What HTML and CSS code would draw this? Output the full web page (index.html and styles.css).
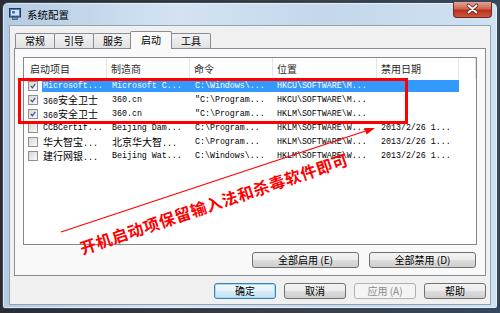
FILE: index.html
```html
<!DOCTYPE html>
<html lang="zh-CN">
<head>
  <meta charset="UTF-8">
  <title>系统配置</title>
  <link rel="stylesheet" href="styles.css">
</head>
<body>

  <div class="window">
    <!-- title bar -->
    <div class="titlebar">
      <svg class="app-icon" viewBox="0 0 12 12">
        <rect x="0.5" y="0.5" width="11" height="8.5" fill="#5a7fb8" stroke="#27395a"/>
        <rect x="2" y="2" width="8" height="5.5" fill="#cfe2f6"/>
        <rect x="3" y="3" width="3" height="2.5" fill="#4a76c0"/>
        <rect x="3.5" y="9" width="5" height="2.5" fill="#7d8ea6" stroke="#27395a" stroke-width="0.6"/>
      </svg>
      <span class="title">系统配置</span>
      <div class="close-btn">
        <svg viewBox="0 0 39 16" width="39" height="16">
          <path d="M15.5 4.5 L23.5 11.5 M23.5 4.5 L15.5 11.5" stroke="#5b1a12" stroke-width="3.6" stroke-linecap="round"/>
          <path d="M15.5 4.5 L23.5 11.5 M23.5 4.5 L15.5 11.5" stroke="#ffffff" stroke-width="2" stroke-linecap="round"/>
        </svg>
      </div>
    </div>

    <div class="client">
      <div class="tabs">
        <div class="tab">常规</div>
        <div class="tab">引导</div>
        <div class="tab">服务</div>
        <div class="tab active">启动</div>
        <div class="tab">工具</div>
      </div>

      <div class="panel">
        <div class="listview">
          <div class="lv-header">
            <div class="cell c1">启动项目</div>
            <div class="cell c2">制造商</div>
            <div class="cell c3">命令</div>
            <div class="cell c4">位置</div>
            <div class="cell c5">禁用日期</div>
            <div class="cell filler"></div>
          </div>

          <div class="lv-row selected">
            <div class="cell c1"><span class="chk on"><svg viewBox="0 0 10 10"><path d="M2.2 4.8 L4.2 7.2 L7.8 2.4" stroke="#33489a" stroke-width="1.5" fill="none"/></svg></span><span class="label">Microsoft...</span></div>
            <div class="cell c2">Microsoft C...</div>
            <div class="cell c3">C:\Windows\...</div>
            <div class="cell c4">HKCU\SOFTWARE\M...</div>
            <div class="cell c5"></div>
          </div>

          <div class="lv-row">
            <div class="cell c1"><span class="chk on"><svg viewBox="0 0 10 10"><path d="M2.2 4.8 L4.2 7.2 L7.8 2.4" stroke="#33489a" stroke-width="1.5" fill="none"/></svg></span><span class="label">360<span class="zh">安全卫士</span></span></div>
            <div class="cell c2">360.cn</div>
            <div class="cell c3">&quot;C:\Program...</div>
            <div class="cell c4">HKCU\SOFTWARE\M...</div>
            <div class="cell c5"></div>
          </div>

          <div class="lv-row">
            <div class="cell c1"><span class="chk on"><svg viewBox="0 0 10 10"><path d="M2.2 4.8 L4.2 7.2 L7.8 2.4" stroke="#33489a" stroke-width="1.5" fill="none"/></svg></span><span class="label">360<span class="zh">安全卫士</span></span></div>
            <div class="cell c2">360.cn</div>
            <div class="cell c3">&quot;C:\Program...</div>
            <div class="cell c4">HKLM\SOFTWARE\W...</div>
            <div class="cell c5"></div>
          </div>

          <div class="lv-row">
            <div class="cell c1"><span class="chk"></span><span class="label">CCBCertif...</span></div>
            <div class="cell c2">Beijing Dam...</div>
            <div class="cell c3">C:\Program...</div>
            <div class="cell c4">HKLM\SOFTWARE\W...</div>
            <div class="cell c5">2013/2/26 1...</div>
          </div>

          <div class="lv-row">
            <div class="cell c1"><span class="chk"></span><span class="label"><span class="zh">华大智宝</span>...</span></div>
            <div class="cell c2"><span class="zh">北京华大智</span>...</div>
            <div class="cell c3">C:\Program...</div>
            <div class="cell c4">HKLM\SOFTWARE\W...</div>
            <div class="cell c5">2013/2/26 1...</div>
          </div>

          <div class="lv-row">
            <div class="cell c1"><span class="chk"></span><span class="label"><span class="zh">建行网银</span>...</span></div>
            <div class="cell c2">Beijing Wat...</div>
            <div class="cell c3">C:\Windows\...</div>
            <div class="cell c4">HKLM\SOFTWARE\W...</div>
            <div class="cell c5">2013/2/26 1...</div>
          </div>
        </div>

        <div class="panel-buttons">
          <button class="btn wide">全部启用 (E)</button>
          <button class="btn wide">全部禁用 (D)</button>
        </div>
      </div>

      <div class="dlg-buttons">
        <button class="btn default">确定</button>
        <button class="btn">取消</button>
        <button class="btn disabled">应用 (A)</button>
        <button class="btn">帮助</button>
      </div>
    </div>
  </div>

  <!-- red annotation drawn over the dialog -->
  <div class="annot-box"></div>
  <svg class="annot-arrow" viewBox="0 0 500 313" width="500" height="313">
    <line x1="61" y1="232" x2="367" y2="130.5" stroke="#ff0000" stroke-width="1.3"/>
    <polygon points="375,128 366.6,134.5 364.4,127.9" fill="#ff0000"/>
  </svg>
  <div class="annot-text">开机启动项保留输入法和杀毒软件即可</div>

</body>
</html>
```

FILE: styles.css
```css
body {
  margin: 0;
  width: 500px;
  height: 313px;
  overflow: hidden;
  position: relative;
  background: linear-gradient(to right, #2a2d33, #3a3f47 60%, #34475e);
  font-family: "Noto Sans CJK SC", sans-serif;
}
.window {
  margin: 2px 0 0 2px;
  width: 496px;
  height: 307px;
  box-sizing: border-box;
  border: 1px solid #3b4756;
  border-radius: 6px 6px 3px 3px;
  background: linear-gradient(to right, #b5cbe2, #d3e3f2 35%, #c4d7eb 65%, #d0e1f1);
  box-shadow: inset 0 0 0 1px rgba(255, 255, 255, 0.55);
  padding: 0 6px 3px;
  display: flex;
  flex-direction: column;
}
.titlebar {
  height: 22px;
  display: flex;
  align-items: center;
}
.app-icon {
  width: 12px;
  height: 12px;
  margin-right: 6px;
}
.title {
  font-size: 10.5px;
  color: #000;
}
.close-btn {
  margin-left: auto;
  margin-right: -1px;
  margin-top: -1px;
  align-self: flex-start;
  width: 39px;
  height: 16px;
  box-sizing: border-box;
  border: 1px solid #6a2a22;
  border-top: none;
  border-radius: 0 0 4px 4px;
  background: linear-gradient(#e4a393, #cf6652 45%, #b8321f 55%, #d0563a);
}
.close-btn svg {
  display: block;
  margin: -1px 0 0 -1px;
}
.client {
  flex: 1;
  background: #f0f0f0;
  border: 1px solid #8fa3b9;
  padding: 5px 4px 0;
}

/* tabs */
.tabs {
  display: flex;
  align-items: flex-end;
  height: 18px;
  padding-left: 1px;
  margin-bottom: -1px;
  position: relative;
  z-index: 1;
}
.tab {
  height: 14px;
  margin-bottom: 1px;
  margin-right: -1px;
  padding: 0 9px;
  border: 1px solid #898c95;
  border-bottom: none;
  border-radius: 2px 2px 0 0;
  background: linear-gradient(#f3f3f3, #e2e2e2);
  font-size: 10px;
  line-height: 14px;
  color: #000;
}
.tab.active {
  height: 17px;
  margin: 0 -1px 0 -2px;
  padding: 0 10px;
  background: #f9f9f9;
  line-height: 16px;
  position: relative;
}
.panel {
  height: 228px;
  box-sizing: border-box;
  border: 1px solid #898c95;
  background: #f9f9f9;
  padding: 8px;
}

/* list view */
.listview {
  height: 188px;
  box-sizing: border-box;
  border: 1px solid #828790;
  background: #fff;
}
.lv-header {
  display: flex;
  height: 21px;
}
.lv-header .cell {
  border-right: 1px solid #e5e5e5;
  font-size: 10px;
  line-height: 21px;
  padding-left: 4px;
  color: #2a2a2a;
}
.lv-header .c1 {
  padding-left: 6px;
}
.cell {
  box-sizing: border-box;
  white-space: nowrap;
}
.c1 { width: 83px; }
.c2 { width: 83px; }
.c3 { width: 83px; }
.c4 { width: 104px; }
.c5 { width: 82px; }
.filler { width: 17px; }
.lv-row {
  display: flex;
  height: 14px;
  font-family: "Liberation Mono", monospace;
  font-size: 8.3px;
  color: #000;
}
.lv-row .cell {
  height: 14px;
  line-height: 14px;
  padding-left: 5px;
}
.lv-row .c4,
.lv-row .c5 {
  padding-left: 4px;
}
.lv-row .c1 {
  display: flex;
  align-items: center;
  padding-left: 4px;
}
.lv-row .label {
  flex: 1;
  height: 14px;
  margin-left: 4px;
  padding-left: 1px;
}
.zh {
  font-family: "Noto Sans CJK SC", sans-serif;
  font-size: 10px;
  line-height: 14px;
}
.lv-row.selected .label,
.lv-row.selected .c2,
.lv-row.selected .c3,
.lv-row.selected .c4,
.lv-row.selected .c5 {
  background: linear-gradient(transparent 1px, #3399ff 1px, #3399ff 13px, transparent 13px);
  color: #fff;
}
.chk {
  width: 10px;
  height: 10px;
  flex: none;
  box-sizing: border-box;
  border: 1px solid #8e8f8f;
  background: linear-gradient(135deg, #d6d6d6, #fafafa);
}
.chk svg {
  display: block;
  width: 8px;
  height: 8px;
}

/* buttons */
.btn {
  width: 62px;
  height: 16px;
  box-sizing: border-box;
  padding: 0;
  border: 1px solid #707070;
  border-radius: 3px;
  background: linear-gradient(#f2f2f2 0%, #ebebeb 50%, #dddddd 50%, #cfcfcf 100%);
  font-family: "Noto Sans CJK SC", sans-serif;
  font-size: 10px;
  line-height: 14px;
  color: #000;
}
.btn.wide {
  width: 107px;
}
.btn.default {
  border-color: #3c7fb1;
  box-shadow: inset 0 0 0 1px #9fdcf6;
  background: linear-gradient(#f1f8fc 0%, #e6f3fa 50%, #d6ebf6 50%, #c9e3f2 100%);
}
.btn.disabled {
  border-color: #adb2b5;
  background: #f4f4f4;
  color: #8a8a8a;
}
.panel-buttons {
  display: flex;
  justify-content: flex-end;
  gap: 10px;
  margin-top: 7px;
  padding-right: 1px;
}
.dlg-buttons {
  display: flex;
  justify-content: flex-end;
  gap: 8px;
  margin-top: 7px;
}

/* red annotation on top */
.annot-box {
  position: absolute;
  left: 18px;
  top: 78px;
  width: 390px;
  height: 46px;
  box-sizing: border-box;
  border: 3px solid #ff0000;
}
.annot-arrow {
  position: absolute;
  left: 0;
  top: 0;
  pointer-events: none;
}
.annot-text {
  position: absolute;
  left: 214px;
  top: 203px;
  transform: translate(-50%, -50%) rotate(-18.6deg);
  font-size: 16px;
  font-weight: bold;
  letter-spacing: 0.6px;
  line-height: 1;
  white-space: nowrap;
  color: #ff0000;
}
```
